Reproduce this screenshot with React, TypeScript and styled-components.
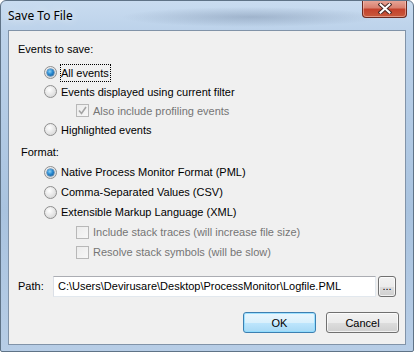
import styled, { createGlobalStyle } from 'styled-components';

const GlobalStyle = createGlobalStyle`
  html, body {
    margin: 0;
    padding: 0;
    background: #ffffff;
  }
  body {
    font-family: "Liberation Sans", Arial, sans-serif;
  }
`;

const Window = styled.div`
  width: 414px;
  height: 352px;
  box-sizing: border-box;
  display: flex;
  flex-direction: column;
  border: 1px solid #5f7387;
  border-radius: 6px 6px 2px 2px;
  overflow: hidden;
  background:
    radial-gradient(ellipse 130px 10px at 250px 16px, rgba(70, 90, 120, 0.28), rgba(70, 90, 120, 0) 100%),
    linear-gradient(to bottom, #c9dcf0 0px, #bcd2ea 30px, #a9c3df 60%, #b7cde6 100%);
`;

const TitleBar = styled.div`
  height: 29px;
  display: flex;
  justify-content: space-between;
  align-items: flex-start;
  padding-left: 7px;
`;

const Title = styled.div`
  font-family: "Noto Sans", "Open Sans", sans-serif;
  font-size: 12px;
  color: #000;
  line-height: 14px;
  padding-top: 8px;
  text-shadow: 0 0 8px rgba(255, 255, 255, 0.9);
`;

const CloseButton = styled.div`
  width: 45px;
  height: 18px;
  margin-right: 6px;
  margin-top: -1px;
  box-sizing: border-box;
  border: 1px solid #6b2a20;
  border-top: none;
  border-radius: 0 0 4px 4px;
  background: linear-gradient(to bottom, #e9a99b 0%, #d98170 45%, #c4422c 55%, #c85a3c 100%);
  box-shadow: inset 0 0 0 1px rgba(255, 220, 210, 0.45);
  display: flex;
  align-items: center;
  justify-content: center;
`;

const Client = styled.div`
  margin: 0 7px;
  height: 315px;
  box-sizing: border-box;
  border: 1px solid #8193a8;
  background: #f0f0f0;
  display: flex;
  flex-direction: column;
  font-size: 11px;
  color: #000;
`;

const Header = styled.div<{ $top: number; $left: number }>`
  height: 20px;
  line-height: 20px;
  margin-top: ${p => p.$top}px;
  padding-left: ${p => p.$left}px;
`;

const Row = styled.div<{ $h: number; $indent: number; $disabled?: boolean }>`
  height: ${p => p.$h}px;
  display: flex;
  align-items: center;
  gap: 4px;
  padding-left: ${p => p.$indent}px;
  color: ${p => (p.$disabled ? '#757575' : '#000')};
`;

const Radio = styled.span<{ $checked?: boolean }>`
  width: 13px;
  height: 13px;
  box-sizing: border-box;
  border-radius: 50%;
  border: 1px solid #8f8f8f;
  background: radial-gradient(circle at 40% 35%, #ffffff 0%, #e9e9e9 45%, #cfcfcf 100%);
  display: flex;
  align-items: center;
  justify-content: center;
  flex: none;

  &::after {
    content: '';
    display: ${p => (p.$checked ? 'block' : 'none')};
    width: 7px;
    height: 7px;
    border-radius: 50%;
    background: radial-gradient(circle at 40% 35%, #8fd3f7 0%, #2a8ad0 45%, #0d4f8c 100%);
    box-shadow: 0 0 0 0.5px #1d5f99;
  }
`;

const Check = styled.span`
  width: 13px;
  height: 13px;
  box-sizing: border-box;
  border: 1px solid #b8b8b8;
  background: linear-gradient(135deg, #ececec, #f7f7f7);
  display: flex;
  align-items: center;
  justify-content: center;
  flex: none;
`;

const Focus = styled.span`
  outline: 1px dotted #000;
  outline-offset: 0;
  padding: 2px 1px 2px 0;
`;

const PathRow = styled.div`
  display: flex;
  align-items: center;
  margin-top: 13px;
  padding-left: 9px;
  height: 22px;
`;

const PathLabel = styled.span`
  width: 35px;
`;

const PathInput = styled.div`
  width: 323px;
  height: 21px;
  box-sizing: border-box;
  background: #fff;
  border: 1px solid #e2e8ee;
  border-top-color: #abadb3;
  border-left-color: #dbdfe6;
  display: flex;
  align-items: center;
  padding-left: 4px;
`;

const Button = styled.div<{ $default?: boolean; $w: number; $h: number }>`
  width: ${p => p.$w}px;
  height: ${p => p.$h}px;
  box-sizing: border-box;
  border: 1px solid ${p => (p.$default ? '#3c7fb1' : '#707070')};
  border-radius: 3px;
  background: ${p =>
    p.$default
      ? 'linear-gradient(to bottom, #eaf6fd 0%, #d9f0fc 50%, #bee6fd 51%, #a7d9f5 100%)'
      : 'linear-gradient(to bottom, #f2f2f2 0%, #ebebeb 50%, #dddddd 51%, #cfcfcf 100%)'};
  box-shadow: inset 0 0 0 1px ${p => (p.$default ? 'rgba(140, 220, 255, 0.8)' : 'rgba(255, 255, 255, 0.7)')};
  display: flex;
  align-items: center;
  justify-content: center;
  flex: none;
`;

const ButtonRow = styled.div`
  display: flex;
  justify-content: flex-end;
  gap: 10px;
  margin-top: 15px;
  padding-right: 6px;
`;

const BottomEdge = styled.div`
  flex: 1;
`;

const CheckMark = () => (
  <svg width="9" height="9" viewBox="0 0 9 9">
    <path d="M1 4.5 L3.5 7.5 L8 1" fill="none" stroke="#a4a4a4" strokeWidth="1.6" />
  </svg>
);

const CloseGlyph = () => (
  <svg width="14" height="11" viewBox="0 0 14 11">
    <path d="M2.5 1.5 L11.5 9.5 M11.5 1.5 L2.5 9.5" stroke="#4a2a26" strokeWidth="4" strokeLinecap="square" />
    <path d="M2.5 1.5 L11.5 9.5 M11.5 1.5 L2.5 9.5" stroke="#ffffff" strokeWidth="2" strokeLinecap="square" />
  </svg>
);

export default function App() {
  return (
    <>
      <GlobalStyle />
      <Window>
        <TitleBar>
          <Title>Save To File</Title>
          <CloseButton>
            <CloseGlyph />
          </CloseButton>
        </TitleBar>
        <Client>
          <Header $top={8} $left={9}>Events to save:</Header>
          <Row $h={19} $indent={35} style={{ marginTop: 4 }}>
            <Radio $checked />
            <Focus>All events</Focus>
          </Row>
          <Row $h={19} $indent={35}>
            <Radio />
            Events displayed using current filter
          </Row>
          <Row $h={19} $indent={67} $disabled>
            <Check>
              <CheckMark />
            </Check>
            Also include profiling events
          </Row>
          <Row $h={19} $indent={35}>
            <Radio />
            Highlighted events
          </Row>
          <Header $top={3} $left={12}>Format:</Header>
          <Row $h={20} $indent={35}>
            <Radio $checked />
            Native Process Monitor Format (PML)
          </Row>
          <Row $h={20} $indent={35}>
            <Radio />
            Comma-Separated Values (CSV)
          </Row>
          <Row $h={20} $indent={35}>
            <Radio />
            Extensible Markup Language (XML)
          </Row>
          <Row $h={20} $indent={67} $disabled>
            <Check />
            Include stack traces (will increase file size)
          </Row>
          <Row $h={20} $indent={67} $disabled>
            <Check />
            Resolve stack symbols (will be slow)
          </Row>
          <PathRow>
            <PathLabel>Path:</PathLabel>
            <PathInput>C:\Users\Devirusare\Desktop\ProcessMonitor\Logfile.PML</PathInput>
            <Button $w={18} $h={21} style={{ marginLeft: 2 }}>...</Button>
          </PathRow>
          <ButtonRow>
            <Button $default $w={73} $h={21}>OK</Button>
            <Button $w={73} $h={21}>Cancel</Button>
          </ButtonRow>
        </Client>
        <BottomEdge />
      </Window>
    </>
  );
}
